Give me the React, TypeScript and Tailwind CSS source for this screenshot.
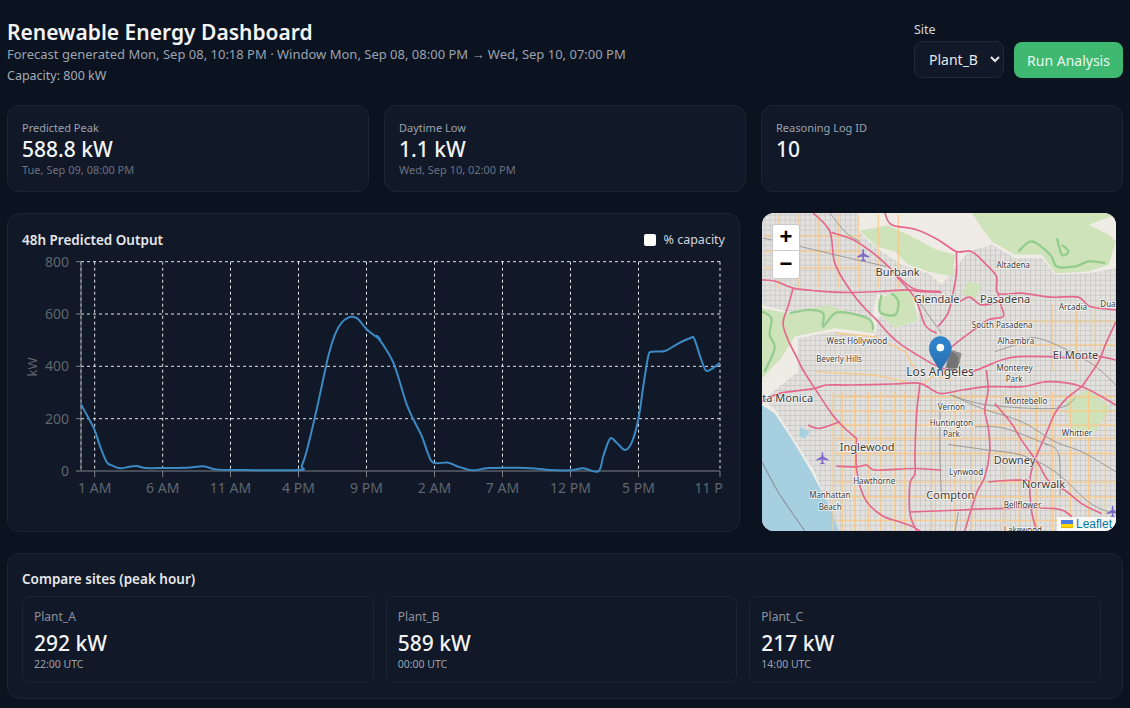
const chartLeft = [[243,595],[265,635],[285,675],[300,720],[320,768],[335,778],[360,787],[385,783],[410,780],[435,786],[490,786],[560,785],[610,781],[645,790],[700,792],[895,792],[905,780],[920,735],[950,610],[985,450],[1005,385],[1025,350],[1045,335],[1060,333],[1075,340],[1100,370],[1140,400]]
const chartRight = [[20,390],[45,425],[70,470],[90,530],[110,595],[130,640],[155,690],[175,745],[190,770],[235,770],[265,782],[310,793],[355,786],[440,785],[500,788],[540,792],[600,793],[640,787],[685,796],[700,750],[720,698],[740,710],[765,732],[785,710],[805,640],[820,540],[835,450],[845,437],[885,435],[920,415],[960,397],[972,397],[990,450],[1005,490],[1015,494],[1035,482],[1050,470]]

const chartPoints = [
  ...chartLeft.map(([x, y]) => [x / 3, y / 3 + 205]),
  ...chartRight.map(([x, y]) => [x / 3 + 370, y / 3 + 205])
]

function curve(pts: number[][]) {
  let d = `M${pts[0][0]} ${pts[0][1]}`
  for (let i = 0; i < pts.length - 1; i++) {
    const p0 = pts[i - 1] || pts[i]
    const p1 = pts[i]
    const p2 = pts[i + 1]
    const p3 = pts[i + 2] || p2
    const c1x = p1[0] + (p2[0] - p0[0]) / 6
    const c1y = p1[1] + (p2[1] - p0[1]) / 6
    const c2x = p2[0] - (p3[0] - p1[0]) / 6
    const c2y = p2[1] - (p3[1] - p1[1]) / 6
    d += ` C${c1x.toFixed(1)} ${c1y.toFixed(1)} ${c2x.toFixed(1)} ${c2y.toFixed(1)} ${p2[0].toFixed(1)} ${p2[1].toFixed(1)}`
  }
  return d
}

const yTicks = [
  { label: '800', y: 260.7 },
  { label: '600', y: 313 },
  { label: '400', y: 365.3 },
  { label: '200', y: 417.7 },
  { label: '0', y: 470 }
]

const xTicks = [
  { label: '1 AM', x: 94.7 },
  { label: '6 AM', x: 162.7 },
  { label: '11 AM', x: 230.5 },
  { label: '4 PM', x: 298.5 },
  { label: '9 PM', x: 366.5 },
  { label: '2 AM', x: 434.5 },
  { label: '7 AM', x: 502.5 },
  { label: '12 PM', x: 570.5 },
  { label: '5 PM', x: 638.5 },
  { label: '11 PM', x: 720 }
]

const motorways = [
  [[175,25],[225,80],[240,175],[285,255],[325,305],[365,345],[400,385],[440,420],[520,470],[560,490]],
  [[230,83],[295,105],[355,145],[400,185],[445,230],[485,255],[555,260]],
  [[22,225],[65,230],[115,250],[185,258],[285,263],[375,260],[455,255],[495,260],[560,262]],
  [[115,250],[100,305],[85,355],[100,405],[125,455],[145,495],[180,550],[230,625],[265,665],[305,700]],
  [[22,590],[75,565],[180,550],[215,540],[285,540],[415,537],[495,535],[555,565],[620,555],[700,545],[800,545],[880,530],[980,545],[1082,600]],
  [[305,700],[305,790],[330,880],[380,930],[435,950],[475,965],[495,977]],
  [[495,535],[485,625],[480,745],[480,805],[465,835],[465,925],[485,977]],
  [[465,920],[600,915],[715,910],[900,910],[950,935]],
  [[245,783],[305,785],[335,780],[365,795],[475,790],[560,795]],
  [[694,495],[699,555],[689,615],[699,665],[704,735],[689,815],[664,865],[629,977]],
  [[979,545],[929,585],[899,625],[869,695],[839,765],[824,825],[829,915],[844,977]],
  [[719,595],[769,655],[799,705],[849,775],[879,825],[929,855],[979,895],[1039,925]],
  [[560,490],[640,500],[690,485],[739,465],[789,455],[879,455],[969,460],[1029,455],[1082,465]],
  [[1082,350],[1050,420],[1030,470],[980,545]],
  [[390,25],[410,60],[485,75],[549,105],[604,140],[649,140],[689,175],[724,215],[729,265],[799,265],[889,277],[969,277],[1004,305],[1082,315]],
  [[604,140],[604,205],[594,265],[579,325],[549,365]],
  [[615,290],[644,277],[679,300],[735,290]],
  [[739,305],[744,335],[699,345],[649,380],[609,410],[579,435]],
  [[160,660],[195,670],[255,650]],
  [[729,265],[739,305]],
  [[420,210],[480,280],[510,360],[545,385]],
  [[700,830],[760,825],[820,825]]
]

const railways = [
  [[25,100],[135,125],[305,165],[395,185]],
  [[225,25],[275,85],[315,110]],
  [[480,270],[520,330],[560,385]],
  [[590,570],[680,610],[800,650],[900,710],[980,740],[1082,800]],
  [[585,570],[700,600],[900,610],[960,580]],
  [[555,590],[555,760],[560,880]],
  [[580,718],[700,735],[800,750],[900,800],[1000,890],[1060,920]],
  [[870,715],[910,745],[915,870]],
  [[22,770],[70,860],[150,977]],
  [[720,440],[780,420],[850,400],[1000,470],[1082,540]],
  [[600,980],[610,920]],
  [[660,665],[750,670],[880,720]]
]

const gridVerticals = [235,262,300,340,378,420,450,530,600,650,745,792,845,892,945,1000,1050]
const gridHorizontals = [575,618,660,700,745,830,875,945]

const parks = [
  'M315 78 L400 62 L470 95 L545 135 L600 150 L592 215 L520 200 L460 180 L420 140 L365 125 Z',
  'M650 25 L1082 25 L1082 30 L1000 60 L1060 90 L1082 110 L1060 180 L1000 200 L900 205 L860 150 L780 150 L710 110 L680 70 Z',
  'M368 285 L440 250 L470 265 L490 345 L420 370 L375 330 Z',
  'M22 310 L100 325 L220 300 L345 345 L360 385 L240 370 L120 395 L80 460 L22 520 Z',
  'M930 590 L1000 553 L1065 610 L1020 680 L950 680 Z',
  'M640 230 L680 240 L660 280 L620 265 Z'
]

const forestEdges = [
  [[22,320],[50,340],[45,390],[60,430],[30,500]],
  [[105,325],[160,315],[205,325],[205,365],[240,325],[285,325],[345,345],[355,375]],
  [[380,270],[375,320],[420,330],[430,290],[410,265]],
  [[790,140],[830,110],[885,150],[905,185],[960,185],[1000,170],[1050,175]],
  [[905,100],[920,150],[940,140],[920,120]]
]

const urban = [
  'M22 25 L310 25 L310 80 L365 130 L440 180 L520 205 L560 240 L640 140 L710 120 L780 160 L860 160 L900 210 L1000 205 L1082 190 L1082 977 L250 977 L180 800 L110 690 L60 610 L22 585 L130 500 L130 400 L240 380 L360 395 L370 335 L490 350 L490 270 L365 270 L350 345 L220 305 L100 320 L22 300 Z'
]

const mapLabels: [string, number, number, number][] = [
  ['Burbank', 428, 213, 33],
  ['Altadena', 774, 189, 24],
  ['Glendale', 545, 293, 33],
  ['Pasadena', 750, 293, 33],
  ['Arcadia', 953, 315, 24],
  ['Dua', 1058, 307, 24],
  ['South Pasadena', 741, 369, 24],
  ['West Hollywood', 306, 418, 24],
  ['Alhambra', 782, 416, 24],
  ['Beverly Hills', 253, 471, 24],
  ['El Monte', 961, 461, 33],
  ['Los Angeles', 555, 512, 36],
  ['Monterey', 778, 497, 24],
  ['Park', 777, 530, 24],
  ['ta Monica', 99, 591, 33],
  ['Vernon', 589, 616, 24],
  ['Montebello', 812, 596, 24],
  ['Huntington', 589, 662, 24],
  ['Park', 589, 695, 24],
  ['Whittier', 965, 692, 24],
  ['Inglewood', 337, 739, 33],
  ['Downey', 778, 777, 33],
  ['Lynwood', 633, 810, 24],
  ['Hawthorne', 358, 836, 24],
  ['Norwalk', 865, 847, 33],
  ['Manhattan', 225, 879, 24],
  ['Beach', 226, 913, 24],
  ['Compton', 586, 882, 33],
  ['Bellflower', 802, 907, 24],
  ['Lakewood', 803, 983, 24]
]

function Plane({ x, y }: { x: number; y: number }) {
  return (
    <path
      transform={`translate(${x} ${y})`}
      d="M-2 -18 C-1 -20 1 -20 2 -18 L3 -6 L18 3 L18 7 L3 3 L2 11 L7 15 L7 18 L0 16 L-7 18 L-7 15 L-2 11 L-3 3 L-18 7 L-18 3 L-3 -6 Z"
      fill="#7f68c9"
    />
  )
}

function MapView() {
  return (
    <div className="relative h-[318px] overflow-hidden rounded-[12px] bg-[#e4e2de]">
      <svg viewBox="22 25 1060 952" preserveAspectRatio="none" className="block h-full w-full">
        <defs>
          <pattern id="streets" width="15" height="15" patternUnits="userSpaceOnUse">
            <rect width="15" height="15" fill="#e2e1de" />
            <path d="M0 0H15M0 0V15" stroke="#b4b4b4" strokeWidth="2.4" />
          </pattern>
          <linearGradient id="pin" x1="0" y1="0" x2="0" y2="1">
            <stop offset="0" stopColor="#2e86cf" />
            <stop offset="1" stopColor="#2a6fae" />
          </linearGradient>
          <filter id="soft">
            <feGaussianBlur stdDeviation="0.9" />
          </filter>
        </defs>
        <g filter="url(#soft)">
          <rect x="22" y="25" width="1060" height="952" fill="#efece6" />
          {urban.map((d) => (
            <path key={d} d={d} fill="url(#streets)" />
          ))}
          {parks.map((d) => (
            <path key={d} d={d} fill="#cfe3bb" />
          ))}
          <path d="M22 600 L60 625 L110 700 L170 800 L230 915 L252 977 L22 977 Z" fill="#a6d0df" />
          <path d="M22 770 L70 860 L150 977" fill="none" stroke="#8fa8c4" strokeWidth="3" />
          <path d="M135 665 L165 680 L150 700 L135 695 Z" fill="#a6d0df" />
          {forestEdges.map((pts, i) => (
            <path key={i} d={curve(pts)} fill="none" stroke="#94cc8e" strokeWidth="7" />
          ))}
          {gridVerticals.map((x) => (
            <path key={x} d={`M${x} 560 L${x} 977`} stroke="#f8c98a" strokeWidth="4" />
          ))}
          {gridHorizontals.map((y) => (
            <path key={y} d={`M240 ${y} L1082 ${y}`} stroke="#f8c98a" strokeWidth="4" />
          ))}
          {[70, 130, 190, 250, 310, 370, 430].map((x) => (
            <path key={x} d={`M${x} 30 L${x} 250`} stroke="#f8c98a" strokeWidth="3.5" />
          ))}
          {[95, 140, 190].map((y) => (
            <path key={y} d={`M30 ${y} L320 ${y}`} stroke="#f8c98a" strokeWidth="3.5" />
          ))}
          {[890, 965, 1020].map((x) => (
            <path key={x} d={`M${x} 300 L${x} 500`} stroke="#f8c98a" strokeWidth="4" />
          ))}
          {[350, 420].map((y) => (
            <path key={y} d={`M780 ${y} L1082 ${y}`} stroke="#f8c98a" strokeWidth="4" />
          ))}
          <path d="M240 385 L360 395 L450 440 L490 510 M180 500 L360 510 L450 530 M500 540 L540 510 L590 525" fill="none" stroke="#f8c98a" strokeWidth="4" />
          {railways.map((pts, i) => (
            <path key={i} d={curve(pts)} fill="none" stroke="#8b8b8b" strokeWidth="2.4" />
          ))}
          {motorways.map((pts, i) => (
            <path key={i} d={curve(pts)} fill="none" stroke="#e5688c" strokeWidth="5" strokeLinejoin="round" />
          ))}
          <path d="M590 435 L620 445 L610 490 L570 490 Z" fill="#8f8f8f" />
          <Plane x={325} y={152} />
          <Plane x={203} y={760} />
          <Plane x={1072} y={920} />
        </g>
        {mapLabels.map(([text, x, y, size]) => (
          <text
            key={text + y}
            x={x}
            y={y}
            textAnchor="middle"
            fontSize={size}
            fontFamily="'Noto Sans', sans-serif"
            fill="#3c3c3c"
            stroke="#ffffff"
            strokeOpacity={0.75}
            strokeWidth={5}
            paintOrder="stroke"
          >
            {text}
          </text>
        ))}
        <ellipse cx="592" cy="470" rx="18" ry="28" fill="#555" opacity="0.45" />
        <path
          d="M556 395 C536 395 523 412 523 432 C523 450 545 478 556 497 C567 478 589 450 589 432 C589 412 576 395 556 395 Z"
          fill="url(#pin)"
          stroke="#2a6fae"
          strokeWidth="1.5"
        />
        <circle cx="556" cy="428" r="11.5" fill="#ffffff" />
      </svg>

      {/* zoom control */}
      <div className="absolute left-[10px] top-[10.5px] w-[28px] rounded-[3px] border border-[#c8c8c8] bg-white text-black">
        <div className="flex h-[26.5px] items-center justify-center border-b border-[#ccc] font-['Liberation_Sans',sans-serif] text-[22px] font-bold leading-none">
          +
        </div>
        <div className="flex h-[26.5px] items-center justify-center font-['Liberation_Sans',sans-serif] text-[22px] font-bold leading-none">
          −
        </div>
      </div>

      {/* attribution */}
      <div className="absolute bottom-0 right-0 flex h-[14px] items-center gap-[3px] bg-white/80 pl-[4px] pr-[4px] font-['Liberation_Sans',sans-serif] text-[12px] leading-none text-[#0078a8]">
        <svg width="12" height="8" viewBox="0 0 12 8">
          <path fill="#4c7be1" d="M0 0h12v4H0z" />
          <path fill="#ffd500" d="M0 4h12v3H0z" />
          <path fill="#e0bc00" d="M0 7h12v1H0z" />
        </svg>
        Leaflet
      </div>
    </div>
  )
}

function OutputChart() {
  return (
    <svg viewBox="22 253 702 260" className="block h-[260px] w-[702px]" fontFamily="'Noto Sans', sans-serif">
      {yTicks.slice(0, 4).map((t) => (
        <path key={t.y} d={`M81 ${t.y} H720`} stroke="#e5e7eb" strokeDasharray="3 3" fill="none" />
      ))}
      <path d="M81 260.7 V470" stroke="#e5e7eb" strokeDasharray="3 3" />
      {xTicks.map((t) => (
        <path key={t.x} d={`M${t.x} 260.7 V470`} stroke="#e5e7eb" strokeDasharray="3 3" />
      ))}
      <path d="M81 260.7 V470 H720" stroke="#7d8288" fill="none" />
      {yTicks.map((t) => (
        <g key={t.label}>
          <path d={`M76 ${t.y} H81`} stroke="#7d8288" />
          <text x="69" y={t.y + 5} textAnchor="end" fontSize="14" fill="#5f6670">
            {t.label}
          </text>
        </g>
      ))}
      {xTicks.map((t) => (
        <g key={t.label}>
          <path d={`M${t.x} 470 V476`} stroke="#7d8288" />
          <text x={t.label === '11 PM' ? 715 : t.x} y="492" textAnchor="middle" fontSize="14" fill="#5f6670">
            {t.label}
          </text>
        </g>
      ))}
      <text x="0" y="0" transform="translate(37 366) rotate(-90)" textAnchor="middle" fontSize="13" fill="#5f6670">
        kW
      </text>
      <path d={curve(chartPoints)} fill="none" stroke="#3b8ac4" strokeWidth="2" />
    </svg>
  )
}

const stats = [
  { label: 'Predicted Peak', value: '588.8 kW', note: 'Tue, Sep 09, 08:00 PM' },
  { label: 'Daytime Low', value: '1.1 kW', note: 'Wed, Sep 10, 02:00 PM' },
  { label: 'Reasoning Log ID', value: '10', note: '' }
]

const sites = [
  { name: 'Plant_A', value: '292 kW', time: '22:00 UTC' },
  { name: 'Plant_B', value: '589 kW', time: '00:00 UTC' },
  { name: 'Plant_C', value: '217 kW', time: '14:00 UTC' }
]

function App() {
  return (
    <div className="h-[708px] overflow-hidden bg-[#0b1220] px-[7px] font-['Noto_Sans',sans-serif] text-[#e5e7eb]">
      {/* Header */}
      <header className="flex h-[105px] items-start justify-between">
        <div className="pt-[18px]">
          <h1 className="text-[21px] font-semibold leading-[28px] text-[#f3f4f6]">Renewable Energy Dashboard</h1>
          <p className="text-[13px] leading-[16px] text-[#9ca3af]">
            Forecast generated Mon, Sep 08, 10:18 PM · Window Mon, Sep 08, 08:00 PM → Wed, Sep 10, 07:00 PM
          </p>
          <p className="mt-[6px] text-[12.5px] leading-[16px] text-[#a5abb5]">Capacity: 800 kW</p>
        </div>
        <div className="flex items-end gap-[10px] pt-[22px]">
          <label className="flex flex-col gap-[3px] text-[12.5px] leading-[16px] text-[#d1d5db]">
            Site
            <select className="h-[37px] w-[90px] rounded-[8px] border border-[#1f2937] bg-[#111827] pl-[10px] text-[14px] text-[#e5e7eb]">
              <option>Plant_B</option>
            </select>
          </label>
          <button className="h-[36px] w-[109px] rounded-[8px] bg-[#3fb871] text-[14px] text-[#e9f7ef]">Run Analysis</button>
        </div>
      </header>

      {/* Stat cards */}
      <section className="grid grid-cols-3 gap-[15px]">
        {stats.map((s) => (
          <div key={s.label} className="h-[87px] rounded-[12px] border border-[#1c2533] bg-[#111827] px-[14px] pt-[15px]">
            <div className="text-[11px] leading-[14px] text-[#9ca3af]">{s.label}</div>
            <div className="text-[21px] font-medium leading-[28px] text-[#f3f4f6]">{s.value}</div>
            <div className="text-[11px] leading-[14px] text-[#6b7280]">{s.note}</div>
          </div>
        ))}
      </section>

      {/* Chart and map */}
      <section className="mt-[21px] grid grid-cols-[733px_354px] gap-[22px]">
        <div className="h-[319px] rounded-[12px] border border-[#1c2533] bg-[#111827] px-[14px] pt-[15px]">
          <div className="flex h-[22px] items-center justify-between">
            <h2 className="text-[13.5px] font-semibold text-[#e5e7eb]">48h Predicted Output</h2>
            <label className="flex items-center gap-[8px] text-[12.5px] text-[#d1d5db]">
              <input type="checkbox" className="h-[12px] w-[12px] appearance-none rounded-[2px] bg-white" />
              % capacity
            </label>
          </div>
          <div className="mt-[3px]">
            <OutputChart />
          </div>
        </div>
        <MapView />
      </section>

      {/* Compare */}
      <section className="mt-[21px] h-[146px] rounded-[12px] border border-[#1c2533] bg-[#111827] px-[14px] pt-[14px]">
        <h2 className="text-[13.5px] font-semibold leading-[22px] text-[#e5e7eb]">Compare sites (peak hour)</h2>
        <div className="mt-[6px] grid w-[1079px] grid-cols-3 gap-[12px]">
          {sites.map((s) => (
            <div key={s.name} className="h-[87px] rounded-[8px] border border-[#1c2533] bg-[#111827] px-[11px] pt-[11px]">
              <div className="text-[12px] leading-[18px] text-[#8b929d]">{s.name}</div>
              <div className="mt-[3px] text-[21px] font-medium leading-[28px] text-[#f3f4f6]">{s.value}</div>
              <div className="text-[10.5px] leading-[14px] text-[#9ca3af]">{s.time}</div>
            </div>
          ))}
        </div>
      </section>
    </div>
  )
}

export default App
